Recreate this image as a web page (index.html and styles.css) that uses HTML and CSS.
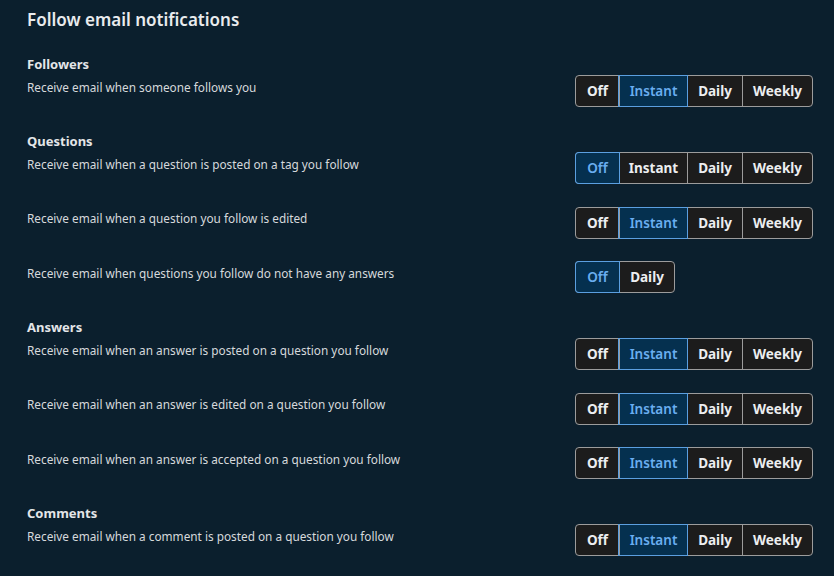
FILE: index.html
```html
<!DOCTYPE html>
<html lang="en">
<head>
    <meta charset="UTF-8">
    <meta name="viewport" content="width=device-width, initial-scale=1.0">
    <title>Follow email notifications</title>
    <link rel="stylesheet" href="styles.css">
</head>
<body>

    <div class="page">
        <h2 class="title">Follow email notifications</h2>

        <div class="section">
            <h3>Followers</h3>
            <div class="row">
                <p>Receive email when someone follows you</p>
                <div class="toggle">
                    <button>Off</button><button class="on">Instant</button><button>Daily</button><button>Weekly</button>
                </div>
            </div>
        </div>

        <div class="section">
            <h3>Questions</h3>
            <div class="row">
                <p>Receive email when a question is posted on a tag you follow</p>
                <div class="toggle">
                    <button class="on">Off</button><button>Instant</button><button>Daily</button><button>Weekly</button>
                </div>
            </div>
            <div class="row">
                <p>Receive email when a question you follow is edited</p>
                <div class="toggle">
                    <button>Off</button><button class="on">Instant</button><button>Daily</button><button>Weekly</button>
                </div>
            </div>
            <div class="row">
                <p>Receive email when questions you follow do not have any answers</p>
                <div class="toggle short">
                    <button class="on">Off</button><button>Daily</button>
                </div>
            </div>
        </div>

        <div class="section">
            <h3>Answers</h3>
            <div class="row">
                <p>Receive email when an answer is posted on a question you follow</p>
                <div class="toggle">
                    <button>Off</button><button class="on">Instant</button><button>Daily</button><button>Weekly</button>
                </div>
            </div>
            <div class="row">
                <p>Receive email when an answer is edited on a question you follow</p>
                <div class="toggle">
                    <button>Off</button><button class="on">Instant</button><button>Daily</button><button>Weekly</button>
                </div>
            </div>
            <div class="row">
                <p>Receive email when an answer is accepted on a question you follow</p>
                <div class="toggle">
                    <button>Off</button><button class="on">Instant</button><button>Daily</button><button>Weekly</button>
                </div>
            </div>
        </div>

        <div class="section">
            <h3>Comments</h3>
            <div class="row">
                <p>Receive email when a comment is posted on a question you follow</p>
                <div class="toggle">
                    <button>Off</button><button class="on">Instant</button><button>Daily</button><button>Weekly</button>
                </div>
            </div>
        </div>
    </div>

</body>
</html>
```

FILE: styles.css
```css
body {
    margin: 0;
    background-color: #0b1f2d;
    font-family: "Noto Sans", "Open Sans", sans-serif;
    color: #e4e6e8;
}
.page {
    width: 786px;
    padding: 8px 0 0 27px;
}
.title {
    margin: 0;
    font-size: 17px;
    font-weight: 600;
    line-height: 24px;
    color: #e9ebed;
}
.section {
    margin-top: 25px;
    display: flex;
    flex-direction: column;
    gap: 22.5px;
}
.section:first-of-type {
    margin-top: 23px;
}
.section h3 {
    margin: 0 0 -20.5px 0;
    font-size: 13px;
    font-weight: 700;
    line-height: 18px;
    color: #e4e6e8;
}
.row {
    display: flex;
    align-items: center;
    justify-content: space-between;
}
.row p {
    margin: 0;
    padding-bottom: 8px;
    font-size: 11.8px;
    line-height: 17px;
    color: #d6d9dc;
}
.toggle {
    display: flex;
    width: 238px;
    height: 32px;
    box-sizing: border-box;
    border: 1px solid #9c9c9c;
    border-radius: 4px;
    background: #1c1c1c;
}
.toggle.short {
    width: 100px;
    margin-right: 138px;
}
.toggle button {
    flex: none;
    margin: 0;
    padding: 0;
    border: none;
    border-left: 1px solid #9c9c9c;
    background: transparent;
    color: #eceef0;
    font-family: inherit;
    font-size: 13.5px;
    font-weight: 700;
}
.toggle button:first-child {
    border-left: none;
    width: 43px;
    border-radius: 3px 0 0 3px;
}
.toggle button:nth-child(2) { width: 68px; }
.toggle button:nth-child(3) { width: 55px; }
.toggle button:nth-child(4) { flex: 1; border-radius: 0 3px 3px 0; }
.toggle.short button:nth-child(2) { flex: 1; border-radius: 0 3px 3px 0; }
.toggle button.on {
    background: #05304f;
    color: #6aaef0;
    font-weight: 600;
    box-shadow: 0 0 0 1px #5b9fe0;
    position: relative;
}
```
